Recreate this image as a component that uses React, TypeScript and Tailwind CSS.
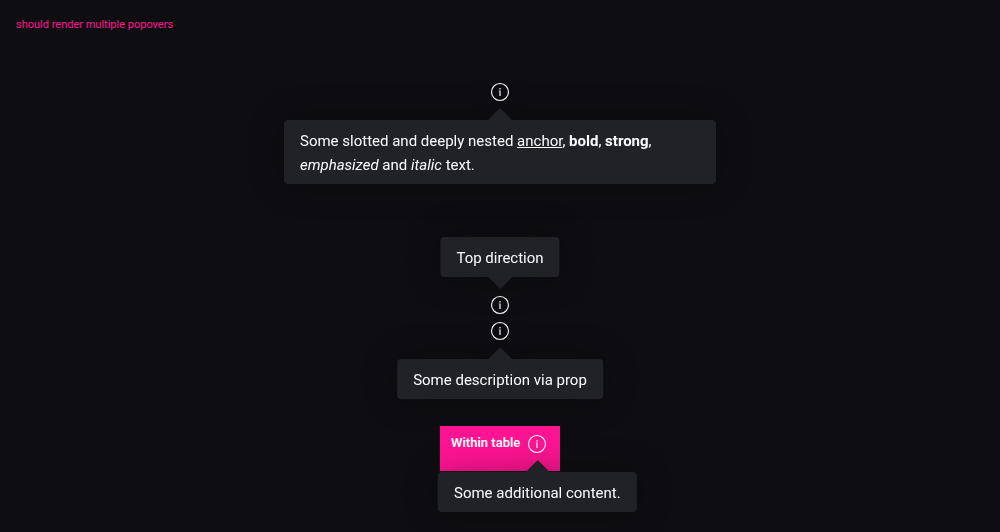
import type { ReactNode } from "react";

function InfoIcon() {
  return (
    <svg viewBox="0 0 24 24" className="size-6" fill="none" aria-hidden="true">
      <circle cx="12" cy="12" r="8.5" stroke="currentColor" strokeWidth="1.1" />
      <path
        d="M11.3 8h1.4v1.4h-1.4zM10.8 10.4h1.9V16h-1.4v-4.7h-.5z"
        fill="currentColor"
        fillOpacity="0.85"
      />
    </svg>
  );
}

type PopoverProps = {
  direction?: "top" | "bottom";
  children: ReactNode;
};

function Popover({ direction = "bottom", children }: PopoverProps) {
  const top = direction === "top";
  return (
    <span className="relative block size-6">
      <button type="button" aria-label="More information" className="block size-6 text-white">
        <InfoIcon />
      </button>
      <span
        role="tooltip"
        className={
          "absolute left-1/2 z-10 flex w-max max-w-[432px] -translate-x-1/2 items-center drop-shadow-[0_0_16px_rgba(0,0,0,0.3)] " +
          (top ? "bottom-full mb-1 flex-col-reverse" : "top-full mt-1 flex-col")
        }
      >
        <svg
          viewBox="0 0 24 12"
          className={top ? "h-3 w-6 rotate-180" : "h-3 w-6"}
          fill="#212225"
          aria-hidden="true"
        >
          <path d="M12 0l12 12H0z" />
        </svg>
        <span className="block rounded bg-[#212225] px-4 pt-[9px] pb-[7px] text-[15px]/6 font-normal text-[#fbfcff]">
          {children}
        </span>
      </span>
    </span>
  );
}

export default function App() {
  return (
    <main className="min-h-screen bg-[#0e0e12] p-4 font-[Roboto,sans-serif]">
      <h1 className="text-[11px]/[18px] text-[#ff1493]">should render multiple popovers</h1>
      <div className="mt-[46px] flex flex-col items-center">
        <Popover>
          Some slotted and deeply nested{" "}
          <a href="#anchor" className="underline">
            anchor
          </a>
          , <b>bold</b>, <strong>strong</strong>, <em>emphasized</em> and <i>italic</i> text.
        </Popover>
        <div className="mt-[189px] flex flex-col gap-0.5">
          <Popover direction="top">Top direction</Popover>
          <Popover>Some description via prop</Popover>
        </div>
        <table className="mt-[83px] w-[120px] bg-[#ff1493]">
          <thead>
            <tr>
              <th scope="col" className="h-[45px] pt-1.5 pr-2.5 pl-[11px] text-left align-top">
                <span className="flex items-start gap-[5px] text-[13px]/[22px] font-semibold whitespace-nowrap text-white">
                  Within table
                  <Popover>Some additional content.</Popover>
                </span>
              </th>
            </tr>
          </thead>
        </table>
      </div>
    </main>
  );
}
